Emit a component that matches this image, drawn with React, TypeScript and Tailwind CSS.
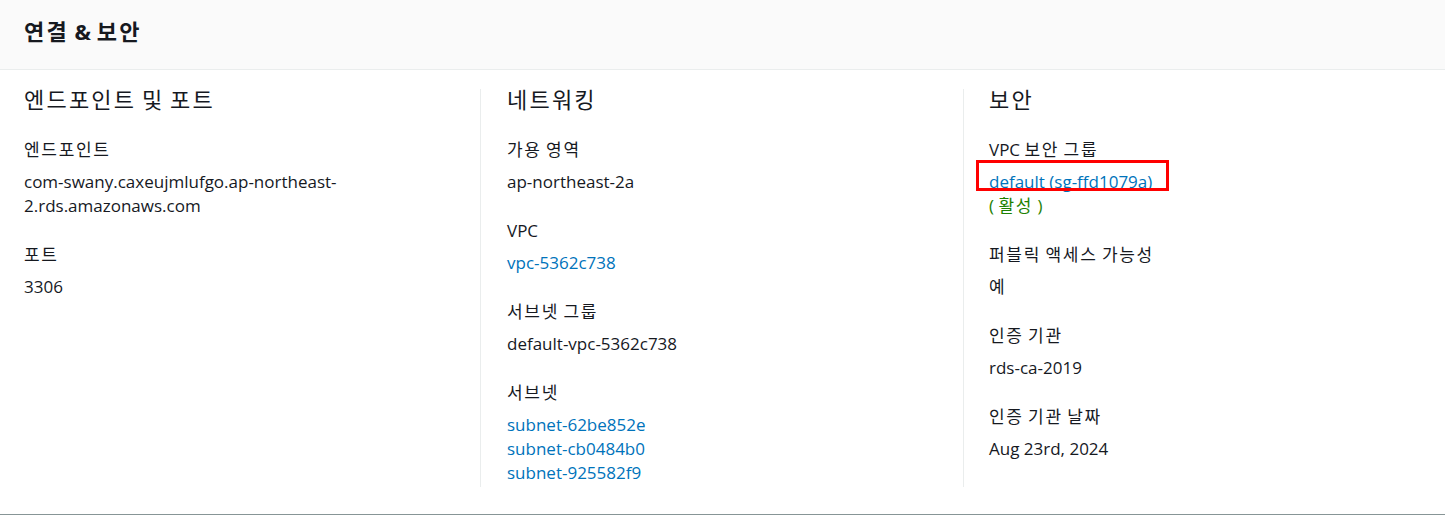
import React from 'react';

type Value = { text: string; kind?: 'text' | 'link' | 'status'; marked?: boolean };
type Field = { label: string; values: Value[] };
type Column = { title: string; pad: string; fields: Field[] };

const columns: Column[] = [
  {
    title: '엔드포인트 및 포트',
    pad: 'pl-6',
    fields: [
      { label: '엔드포인트', values: [{ text: 'com-swany.caxeujmlufgo.ap-northeast-2.rds.amazonaws.com' }] },
      { label: '포트', values: [{ text: '3306' }] },
    ],
  },
  {
    title: '네트워킹',
    pad: 'border-l border-[#eaeded] pl-[26px]',
    fields: [
      { label: '가용 영역', values: [{ text: 'ap-northeast-2a' }] },
      { label: 'VPC', values: [{ text: 'vpc-5362c738', kind: 'link' }] },
      { label: '서브넷 그룹', values: [{ text: 'default-vpc-5362c738' }] },
      {
        label: '서브넷',
        values: [
          { text: 'subnet-62be852e', kind: 'link' },
          { text: 'subnet-cb0484b0', kind: 'link' },
          { text: 'subnet-925582f9', kind: 'link' },
        ],
      },
    ],
  },
  {
    title: '보안',
    pad: 'border-l border-[#eaeded] pl-[25px]',
    fields: [
      {
        label: 'VPC 보안 그룹',
        values: [
          { text: 'default (sg-ffd1079a)', kind: 'link', marked: true },
          { text: '( 활성 )', kind: 'status' },
        ],
      },
      { label: '퍼블릭 액세스 가능성', values: [{ text: '예' }] },
      { label: '인증 기관', values: [{ text: 'rds-ca-2019' }] },
      { label: '인증 기관 날짜', values: [{ text: 'Aug 23rd, 2024' }] },
    ],
  },
];

// hangul in the reference font runs a bit wider than Noto CJK, so space those runs out
const Ko = ({ text }: { text: string }) => (
  <>
    {text.split(/([\uAC00-\uD7A3]+)/).map((part, i) =>
      /[\uAC00-\uD7A3]/.test(part) ? (
        <span key={i} className="tracking-[0.1em]">
          {part}
        </span>
      ) : (
        <React.Fragment key={i}>{part}</React.Fragment>
      ),
    )}
  </>
);

const ValueLine = ({ value }: { value: Value }) => {
  if (value.kind === 'link') {
    return (
      <div className="relative">
        <a href="#" className="text-[#0073bb] hover:underline">
          {value.text}
        </a>
        {value.marked && (
          <span className="pointer-events-none absolute left-[-13px] top-[-10px] h-[31px] w-[193px] border-[3px] border-[#f00]" />
        )}
      </div>
    );
  }
  if (value.kind === 'status') {
    return (
      <div className="text-[#1d8102]">
        <Ko text={value.text} />
      </div>
    );
  }
  return (
    <div className="break-words">
      <Ko text={value.text} />
    </div>
  );
};

export default function App() {
  return (
    <div
      className="w-[1445px] h-[515px] bg-white border-b border-[#879596] text-[#16191f] text-[17px] leading-[24px]"
      style={{ fontFamily: '"Open Sans", "Noto Sans CJK KR", sans-serif' }}
    >
      <div className="h-[70px] bg-[#fafafa] border-b border-[#eaeded] px-6 pt-[19px]">
        <h2 className="text-[22px] leading-[24px] font-bold">
          <Ko text="연결 & 보안" />
        </h2>
      </div>
      <div className="grid grid-cols-[480px_483px_1fr] pt-[19px]">
        {columns.map((col) => (
          <div key={col.title} className={`${col.pad} pr-6 pb-[2px]`}>
            <h3 className="text-[22px] leading-[20px]">
              <Ko text={col.title} />
            </h3>
            <div className="mt-[29px] flex flex-col gap-[25px]">
              {col.fields.map((field) => (
                <div key={field.label}>
                  <div>
                    <Ko text={field.label} />
                  </div>
                  <div className="mt-[8px]">
                    {field.values.map((v) => (
                      <ValueLine key={v.text} value={v} />
                    ))}
                  </div>
                </div>
              ))}
            </div>
          </div>
        ))}
      </div>
    </div>
  );
}
